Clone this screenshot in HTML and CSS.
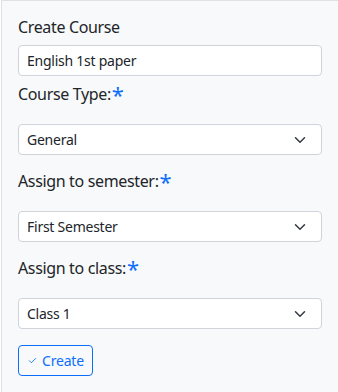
FILE: index.html
```html
<!DOCTYPE html>
<html>
<head>
<meta charset="utf-8">
<link rel="stylesheet" href="styles.css">
</head>
<body>
<div class="panel">
  <form class="form">
    <label class="label label-plain">Create Course</label>
    <div class="control control-input">English 1st paper</div>

    <label class="label label-req">Course Type:<span class="star">*</span></label>
    <div class="control control-select"><span>General</span><svg class="chev" viewBox="0 0 16 16" width="12" height="12"><path d="m2 5 6 6 6-6" fill="none" stroke="#343a40" stroke-width="2" stroke-linecap="round" stroke-linejoin="round"/></svg></div>

    <label class="label label-req">Assign to semester:<span class="star">*</span></label>
    <div class="control control-select"><span>First Semester</span><svg class="chev" viewBox="0 0 16 16" width="12" height="12"><path d="m2 5 6 6 6-6" fill="none" stroke="#343a40" stroke-width="2" stroke-linecap="round" stroke-linejoin="round"/></svg></div>

    <label class="label label-req">Assign to class:<span class="star">*</span></label>
    <div class="control control-select"><span>Class 1</span><svg class="chev" viewBox="0 0 16 16" width="12" height="12"><path d="m2 5 6 6 6-6" fill="none" stroke="#343a40" stroke-width="2" stroke-linecap="round" stroke-linejoin="round"/></svg></div>

    <div class="actions">
      <button type="button" class="btn"><svg class="check" viewBox="0 0 16 16" width="9" height="9"><path d="M2.5 8.5 6 12l7.5-7.5" fill="none" stroke="#0d6efd" stroke-width="1.6" stroke-linecap="round" stroke-linejoin="round"/></svg>Create</button>
    </div>
  </form>
</div>
</body>
</html>
```

FILE: styles.css
```css
html, body {
  margin: 0;
  padding: 0;
  background: #ffffff;
  font-family: "Noto Sans", "Open Sans", sans-serif;
  color: #212529;
}

.panel {
  margin-left: 1px;
  height: 392px;
  box-sizing: border-box;
  background: #f8f9fa;
  border-top: 1px solid #dee2e6;
  border-left: 1px solid #dee2e6;
  padding: 14px 16px 0 16px;
}

.form {
  display: flex;
  flex-direction: column;
}

.label {
  display: block;
  font-size: 16px;
  line-height: 24px;
  height: 24px;
  letter-spacing: -0.35px;
  white-space: nowrap;
}

.label-plain {
  margin-bottom: 6px;
}

.label-req {
  margin-bottom: 18px;
}

.star {
  color: #0d6efd;
  font-size: 22px;
  line-height: 0;
  vertical-align: -3px;
  margin-left: 1px;
}

.control {
  box-sizing: border-box;
  height: 31px;
  background: #ffffff;
  border: 1px solid #ced4da;
  border-radius: 4px;
  font-size: 14px;
  line-height: 21px;
  letter-spacing: -0.25px;
  padding: 4px 8px;
  color: #212529;
}

.control-input {
  margin-bottom: 6px;
}

.control-select {
  display: flex;
  align-items: center;
  justify-content: space-between;
  padding-right: 15px;
  margin-bottom: 14px;
}

.chev {
  display: block;
}

.actions {
  display: flex;
  margin-top: 2px;
}

.btn {
  box-sizing: border-box;
  height: 31px;
  display: inline-flex;
  align-items: center;
  gap: 5px;
  padding: 0 8px 0 9px;
  background: transparent;
  border: 1px solid #0d6efd;
  border-radius: 4px;
  color: #0d6efd;
  font-family: "Noto Sans", "Open Sans", sans-serif;
  font-size: 14px;
  line-height: 21px;
  letter-spacing: -0.2px;
}

.check {
  display: block;
}
```
